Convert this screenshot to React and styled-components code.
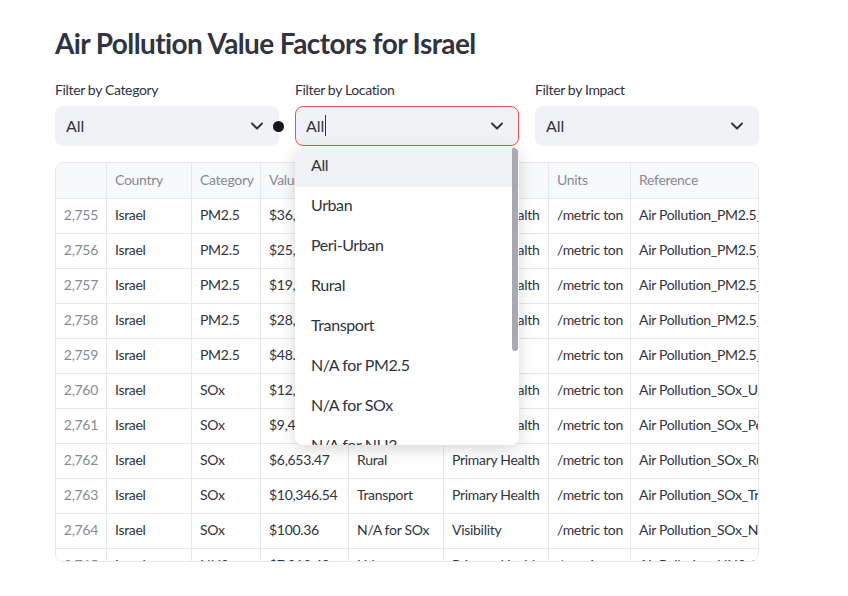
import React from 'react';
import styled, { createGlobalStyle } from 'styled-components';
import { ChevronDown } from 'lucide-react';

const GlobalStyle = createGlobalStyle`
  body {
    margin: 0;
    background: #ffffff;
    font-family: Lato, "Noto Sans", sans-serif;
    color: #31333f;
  }
  * { box-sizing: border-box; }
`;

const Page = styled.div`
  padding: 27px 89px 0 55px;
  width: 848px;
`;

const Title = styled.h1`
  margin: 0;
  font-size: 28px;
  line-height: 1.2;
  font-weight: 700;
  letter-spacing: -0.6px;
  color: #31333f;
`;

const Filters = styled.div`
  display: grid;
  grid-template-columns: repeat(3, 224px);
  gap: 16px;
  margin-top: 18px;
`;

const Filter = styled.div`
  position: relative;
`;

const Label = styled.div`
  font-size: 14px;
  line-height: 22px;
  letter-spacing: -0.35px;
  margin-bottom: 5px;
`;

const SelectBox = styled.div`
  height: 40px;
  display: flex;
  align-items: center;
  padding: 0 11px 0 10px;
  background: #f0f2f6;
  border-radius: 8px;
  border: 1px solid ${({ $active }) => ($active ? '#ff4b4b' : 'transparent')};
  font-size: 16px;
`;

const SelectValue = styled.div`
  flex: 1;
  display: flex;
  align-items: center;
`;

const Caret = styled.span`
  width: 1px;
  height: 21px;
  margin-left: 1px;
  background: #31333f;
`;

const Pointer = styled.div`
  position: absolute;
  left: 218px;
  top: 42px;
  width: 11px;
  height: 11px;
  border-radius: 50%;
  background: #15151a;
`;

const Menu = styled.div`
  position: absolute;
  left: 0;
  right: 0;
  top: calc(100% + 1px);
  height: 298px;
  overflow: hidden;
  background: #ffffff;
  border-radius: 8px;
  box-shadow: 0 4px 16px rgba(0, 0, 0, 0.16);
  z-index: 10;
`;

const MenuItem = styled.div`
  height: 40px;
  display: flex;
  align-items: center;
  padding: 0 0 4px 16px;
  font-size: 16px;
  letter-spacing: -0.4px;
  background: ${({ $hover }) => ($hover ? '#f0f2f6' : '#ffffff')};
`;

const ScrollThumb = styled.div`
  position: absolute;
  right: 1px;
  top: 0;
  width: 6px;
  height: 204px;
  border-radius: 3px;
  background: #a8a8b0;
`;

const TableWrap = styled.div`
  margin-top: 16px;
  height: 400px;
  border: 1px solid #e6e8ed;
  border-radius: 8px;
  overflow: hidden;
`;

const Row = styled.div`
  display: grid;
  grid-template-columns: 51px 85px 69px 88px 95px 105px 82px 240px;
  height: ${({ $header }) => ($header ? '36px' : '35px')};
  background: ${({ $header }) => ($header ? '#f8f9fb' : '#ffffff')};
  border-bottom: 1px solid #e6e8ed;
`;

const Cell = styled.div`
  display: flex;
  align-items: center;
  justify-content: ${({ $index }) => ($index ? 'flex-end' : 'flex-start')};
  padding: 0 8px 2px;
  border-right: 1px solid #e6e8ed;
  font-size: 14px;
  letter-spacing: -0.3px;
  white-space: nowrap;
  overflow: hidden;
  color: ${({ $muted }) => ($muted ? '#878a94' : '#31333f')};
`;

const columns = ['', 'Country', 'Category', 'Value', 'Location', 'Impact', 'Units', 'Reference'];

const rows = [
  ['2,755', 'Israel', 'PM2.5', '$36,184.73', 'Urban', 'Primary Health', '/metric ton', 'Air Pollution_PM2.5_Urban'],
  ['2,756', 'Israel', 'PM2.5', '$25,329.18', 'Peri-Urban', 'Primary Health', '/metric ton', 'Air Pollution_PM2.5_Peri-Urban'],
  ['2,757', 'Israel', 'PM2.5', '$19,173.62', 'Rural', 'Primary Health', '/metric ton', 'Air Pollution_PM2.5_Rural'],
  ['2,758', 'Israel', 'PM2.5', '$28,874.05', 'Transport', 'Primary Health', '/metric ton', 'Air Pollution_PM2.5_Transport'],
  ['2,759', 'Israel', 'PM2.5', '$48.86', 'N/A for PM2.5', 'Visibility', '/metric ton', 'Air Pollution_PM2.5_N/A for PM2.5'],
  ['2,760', 'Israel', 'SOx', '$12,683.29', 'Urban', 'Primary Health', '/metric ton', 'Air Pollution_SOx_Urban'],
  ['2,761', 'Israel', 'SOx', '$9,447.85', 'Peri-Urban', 'Primary Health', '/metric ton', 'Air Pollution_SOx_Peri-Urban'],
  ['2,762', 'Israel', 'SOx', '$6,653.47', 'Rural', 'Primary Health', '/metric ton', 'Air Pollution_SOx_Rural'],
  ['2,763', 'Israel', 'SOx', '$10,346.54', 'Transport', 'Primary Health', '/metric ton', 'Air Pollution_SOx_Transport'],
  ['2,764', 'Israel', 'SOx', '$100.36', 'N/A for SOx', 'Visibility', '/metric ton', 'Air Pollution_SOx_N/A for SOx'],
  ['2,765', 'Israel', 'NH3', '$7,012.40', 'Urban', 'Primary Health', '/metric ton', 'Air Pollution_NH3_Urban'],
];

const locations = ['All', 'Urban', 'Peri-Urban', 'Rural', 'Transport', 'N/A for PM2.5', 'N/A for SOx', 'N/A for NH3'];

const Select = ({ active, children }) => (
  <SelectBox $active={active}>
    <SelectValue>{children}</SelectValue>
    <ChevronDown size={20} strokeWidth={2.4} color="#31333f" />
  </SelectBox>
);

export default function App() {
  return (
    <>
      <GlobalStyle />
      <Page>
        <Title>Air Pollution Value Factors for Israel</Title>
        <Filters>
          <Filter>
            <Label>Filter by Category</Label>
            <Select>All</Select>
            <Pointer />
          </Filter>
          <Filter>
            <Label>Filter by Location</Label>
            <Select active>
              All
              <Caret />
            </Select>
            <Menu>
              {locations.map((loc, i) => (
                <MenuItem key={loc} $hover={i === 0}>
                  {loc}
                </MenuItem>
              ))}
              <ScrollThumb />
            </Menu>
          </Filter>
          <Filter>
            <Label>Filter by Impact</Label>
            <Select>All</Select>
          </Filter>
        </Filters>
        <TableWrap>
          <Row $header>
            {columns.map((c, i) => (
              <Cell key={i} $muted>
                {c}
              </Cell>
            ))}
          </Row>
          {rows.map((r) => (
            <Row key={r[0]}>
              {r.map((v, i) => (
                <Cell key={i} $index={i === 0} $muted={i === 0}>
                  {v}
                </Cell>
              ))}
            </Row>
          ))}
        </TableWrap>
      </Page>
    </>
  );
}
